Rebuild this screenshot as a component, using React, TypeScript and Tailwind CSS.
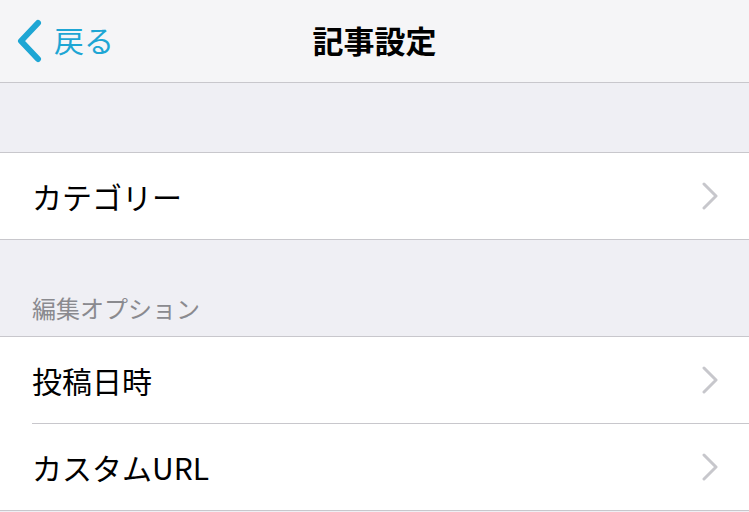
import React from 'react';

const font = { fontFamily: '"Noto Sans CJK JP", "Noto Sans", sans-serif' };

const Chevron: React.FC = () => (
  <svg width="16" height="28" viewBox="0 0 16 28" fill="none" className="text-[#c7c7cc]">
    <path d="M2 2 L14 14 L2 26" stroke="currentColor" strokeWidth="3" strokeLinecap="round" strokeLinejoin="round" />
  </svg>
);

const Row: React.FC<{ label: string; inset?: boolean }> = ({ label, inset }) => (
  <div className="bg-white">
    <div className={`h-[87px] flex items-center pr-[31px] border-b border-[#c8c7cc] ${inset ? 'ml-[32px]' : 'pl-[32px]'}`}>
      <span className="flex-1 text-[30px] leading-none text-black">{label}</span>
      <Chevron />
    </div>
  </div>
);

export default function App() {
  return (
    <div className="w-[749px] h-[512px] bg-[#efeff4] overflow-hidden" style={font}>
      {/* nav bar */}
      <div className="h-[83px] bg-[#f5f5f7] border-b border-[#c8c7cc] relative flex items-center justify-center">
        <div className="absolute left-[14px] top-0 h-full flex items-center gap-[10px] text-[#1ea6d4]">
          <svg width="30" height="44" viewBox="0 0 30 44" fill="none">
            <path d="M24 4 L7 22 L24 40" stroke="currentColor" strokeWidth="6" strokeLinecap="round" strokeLinejoin="round" />
          </svg>
          <span className="text-[30px] leading-none -mt-[4px]">戻る</span>
        </div>
        <h1 className="text-[31px] font-bold leading-none text-black -mt-[4px]">記事設定</h1>
      </div>

      <div className="h-[70px] border-b border-[#c8c7cc]" />

      <Row label="カテゴリー" />

      <div className="h-[97px] border-b border-[#c8c7cc] flex items-end pl-[32px] pb-[16px]">
        <span className="text-[24px] leading-none text-[#8a8a8f]">編集オプション</span>
      </div>

      <Row label="投稿日時" inset />
      <Row label="カスタムURL" />
    </div>
  );
}
